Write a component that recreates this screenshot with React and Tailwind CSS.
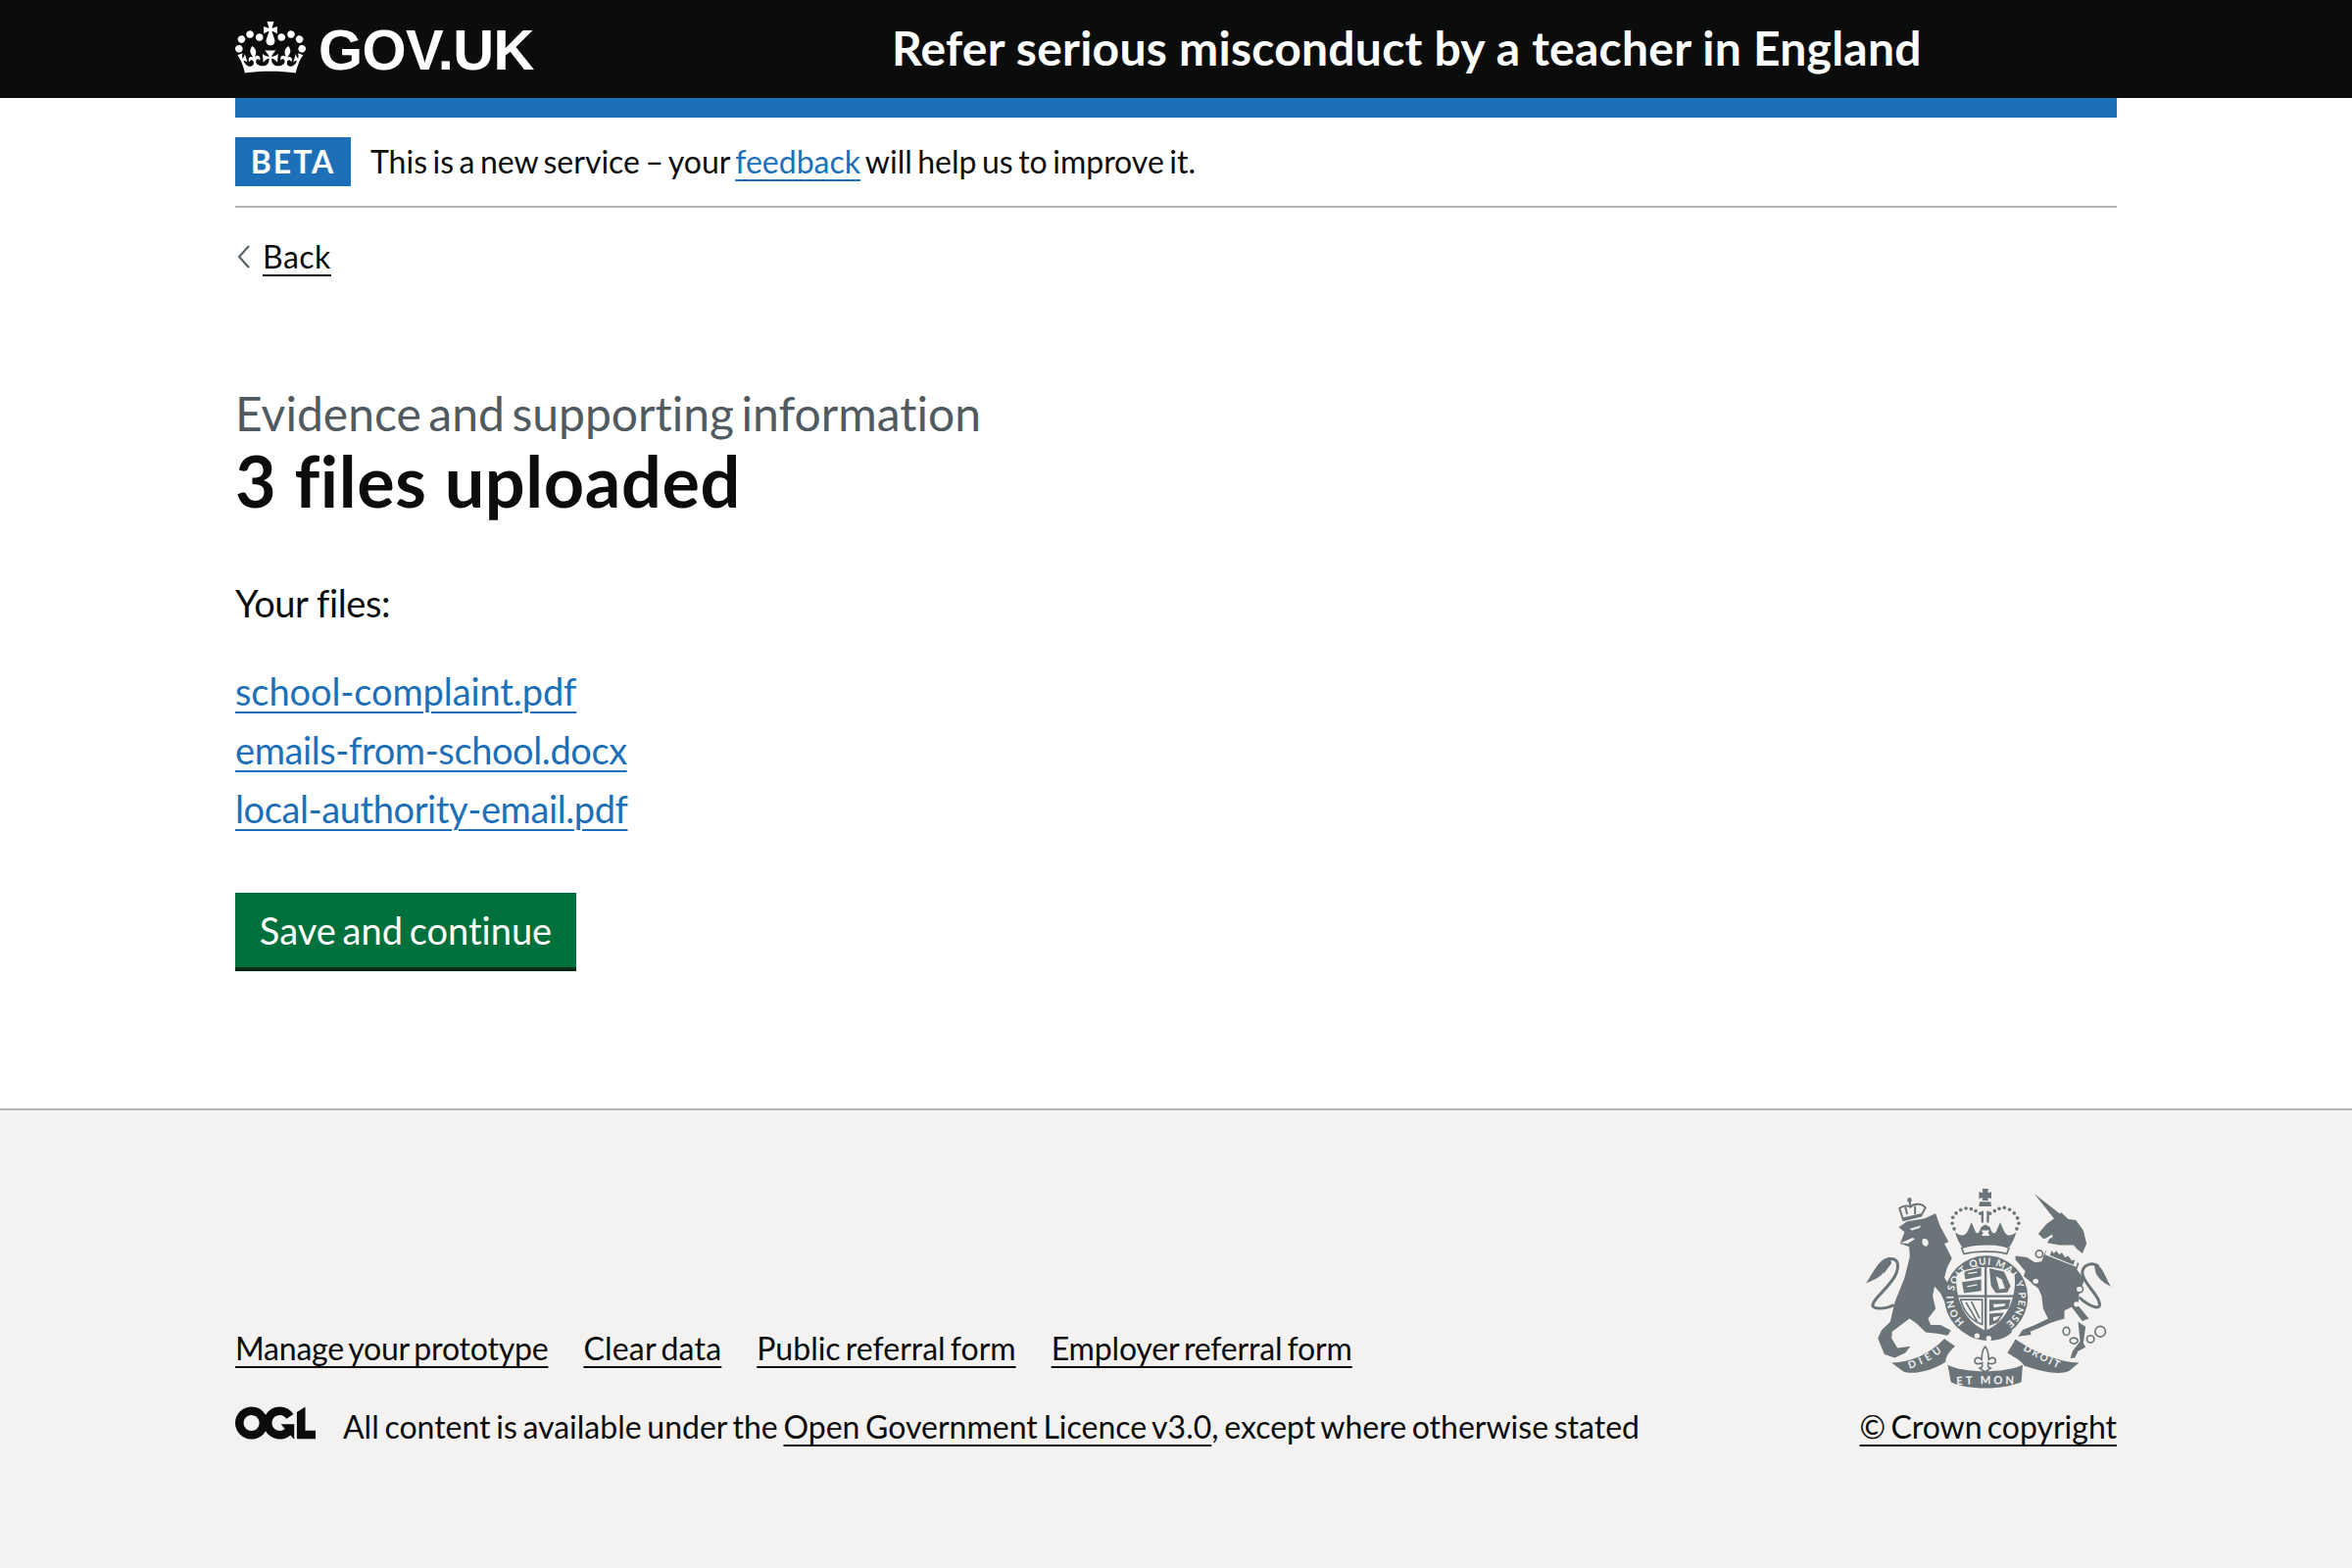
const F = "[font-family:'Lato',sans-serif] [font-variant-ligatures:none]";

function Crown() {
  return (
    <svg viewBox="0 0 132 97" width="72" height="53" className="block shrink-0" fill="currentColor">
      <path fillRule="evenodd" d="M25 30.2c3.5 1.5 7.7-.2 9.1-3.7 1.5-3.6-.2-7.8-3.9-9.2-3.6-1.4-7.6.3-9.1 3.9-1.4 3.5.3 7.5 3.9 9zM9 39.5c3.6 1.5 7.8-.2 9.2-3.7 1.5-3.6-.2-7.8-3.9-9.1-3.6-1.5-7.6.2-9.1 3.8-1.4 3.5.3 7.5 3.8 9zM4.4 57.2c3.5 1.5 7.7-.2 9.1-3.8 1.5-3.6-.2-7.7-3.9-9.1-3.5-1.5-7.6.3-9.1 3.8-1.4 3.5.3 7.6 3.9 9.1zm38.3-21.4c3.5 1.5 7.7-.2 9.1-3.8 1.5-3.6-.2-7.7-3.9-9.1-3.6-1.5-7.6.3-9.1 3.8-1.3 3.6.4 7.7 3.9 9.1zm64.4-5.6c-3.6 1.5-7.8-.2-9.1-3.7-1.5-3.6.2-7.8 3.8-9.2 3.6-1.4 7.7.3 9.2 3.9 1.3 3.5-.4 7.5-3.9 9zm15.9 9.3c-3.6 1.5-7.7-.2-9.1-3.7-1.5-3.6.2-7.8 3.7-9.1 3.6-1.5 7.7.2 9.2 3.8 1.5 3.5-.3 7.5-3.8 9zm4.7 17.7c-3.6 1.5-7.8-.2-9.2-3.8-1.5-3.6.2-7.7 3.9-9.1 3.6-1.5 7.7.3 9.2 3.8 1.3 3.5-.4 7.6-3.9 9.1zM89.3 35.8c-3.6 1.5-7.8-.2-9.2-3.8-1.4-3.6.2-7.7 3.9-9.1 3.6-1.5 7.7.3 9.2 3.8 1.4 3.6-.3 7.7-3.9 9.1zM69.7 17.7l8.9 4.7V9.3l-8.9 2.8c-.2-.3-.5-.6-.9-.9L72.4 0H59.6l3.5 11.2c-.3.3-.6.5-.9.9l-8.8-2.8v13.1l8.8-4.7c.3.3.6.7.9.9l-5 15.4v.1c-.2.8-.4 1.6-.4 2.4 0 4.1 3.1 7.5 7 8.1h.2c.3 0 .7.1 1 .1.4 0 .7 0 1-.1h.2c4-.6 7.1-4.1 7.1-8.1 0-.8-.1-1.7-.4-2.4V34l-5.1-15.4c.4-.2.7-.6 1-.9zM66 92.8c16.9 0 32.8 1.1 47.1 3.2 4-16.9 8.9-26.7 14-33.5l-9.6-3.4c1 4.9 1.1 7.2 0 10.2-1.5-1.4-3-4.3-4.2-8.7L108.6 76c2.8-2 5-3.2 7.5-3.3-4.4 9.4-10 11.9-13.6 11.2-4.3-.8-6.3-4.6-5.6-7.9 1-4.7 5.7-5.9 8-.5 4.3-8.7-3-11.4-7.6-8.8 7.1-7.2 7.9-13.5 2.1-21.1-8 6.1-8.1 12.3-4.5 20.8-4.7-5.4-12.1-2.5-9.5 6.2 3.4-5.2 7.9-2 7.2 3.1-.6 4.3-6.4 7.8-13.5 7.2-10.3-.9-10.9-8-11.2-13.8 2.5-.5 7.1 1.8 11 7.3L80.2 60c-4.1 4.4-8 5.3-12.3 5.4 1.4-4.4 8-11.6 8-11.6H55.5s6.4 7.2 7.9 11.6c-4.2-.1-8-1-12.3-5.4l1.4 16.4c3.9-5.5 8.5-7.7 10.9-7.3-.3 5.8-.9 12.8-11.1 13.8-7.2.6-12.9-2.9-13.5-7.2-.7-5 3.8-8.3 7.1-3.1 2.7-8.7-4.6-11.6-9.4-6.2 3.7-8.5 3.6-14.7-4.6-20.8-5.8 7.6-5 13.9 2.2 21.1-4.7-2.6-11.9.1-7.7 8.8 2.3-5.5 7.1-4.2 8.1.5.7 3.3-1.3 7.1-5.7 7.9-3.5.7-9-1.8-13.5-11.2 2.5.1 4.7 1.3 7.5 3.3l-4.7-15.4c-1.2 4.4-2.7 7.2-4.3 8.7-1.1-3-.9-5.3 0-10.2l-9.5 3.4c5 6.9 9.9 16.7 14 33.5 14.8-2.1 30.8-3.2 47.7-3.2z" />
    </svg>
  );
}

function Ogl() {
  return (
    <svg viewBox="0 0 483.2 195.7" width="82" height="34" className="block shrink-0 mb-[4px]" fill="currentColor">
      <path d="M421.5 142.8V.1l-50.7 32.3v161.1h112.4v-50.7zm-122.3-9.6A47.12 47.12 0 0 1 221 97.8c0-26 21.1-47.1 47.1-47.1 16.7 0 31.4 8.7 39.7 21.8l42.7-27.2A97.63 97.63 0 0 0 268.1 0c-36.5 0-68.3 20.1-85.1 49.7A98 98 0 0 0 97.8 0C43.9 0 0 43.9 0 97.8s43.9 97.8 97.8 97.8c36.5 0 68.3-20.1 85.1-49.7a97.76 97.76 0 0 0 149.6 25.4l19.4 22.2h3v-87.8h-80l24.3 27.5zM97.8 145c-26 0-47.1-21.1-47.1-47.1s21.1-47.1 47.1-47.1 47.2 21 47.2 47S123.8 145 97.8 145" />
    </svg>
  );
}

function Crest() {
  const d = "#6b7579";
  const l = "#f3f2f1";
  const ff = "'Lato',sans-serif";
  return (
    <svg viewBox="60 60 780 640" width="260" height="213" className="block">
      <defs>
        <path id="garter" d="M374 480 A100 100 0 1 1 498 486" />
        <path id="rib1" d="M205 624 C245 612 280 592 312 566" />
        <path id="rib2" d="M350 674 C400 670 480 670 527 672" />
        <path id="rib3" d="M552 566 C590 588 630 610 668 626" />
      </defs>
      <g fill="none" stroke={d} strokeWidth="6">
        <path d="M186 168 L174 132 C190 120 200 124 208 128 C218 116 242 116 254 130 L240 155 Z" />
        <path d="M208 128 L205 108 M192 128 L198 150 M222 125 L222 150" />
      </g>
      <path fill={d} d="M200 100 L210 100 L212 112 L198 112 Z M186 160 L240 148 L244 156 L190 170 Z" />
      <path fill={d} d="M172 190 L198 172 L250 164 L285 148 L298 185 L325 235 L312 240 L335 285 L320 315 L312 345 L345 400 L345 426 L318 430 L300 392 L282 372 L276 400 L285 440 L262 470 L270 490 L300 490 L332 506 L322 522 L290 516 L255 512 L225 484 L205 470 L152 510 L150 530 L168 560 L208 555 L192 575 L160 590 L128 580 L108 530 L120 505 L146 480 L160 420 L190 345 L206 280 L204 250 L176 240 L190 205 Z" />
      <path fill={l} d="M246 226 C262 222 268 240 258 248 C248 250 240 240 246 226 Z M205 195 L240 185 L236 192 L212 200 Z M178 238 L215 222 L222 226 L200 240 Z" />
      <path fill="none" stroke={d} strokeWidth="9" d="M158 428 C125 445 90 440 92 428 C96 405 150 370 165 330 C176 298 165 282 138 288" />
      <path fill={d} d="M145 282 C115 282 95 325 72 362 C95 350 115 345 128 325 C118 345 135 320 150 300 Z" />
      <path fill={d} d="M428 72 L447 72 L445 84 L456 82 L456 102 L445 100 L447 108 L428 108 L430 100 L418 102 L418 82 L430 84 Z M420 112 L454 112 L456 126 L418 126 Z M425 140 L432 140 L432 176 L425 176 Z M442 140 L449 140 L449 176 L442 176 Z" />
      <g fill={d}>
        {[[342,195],[336,178],[338,160],[348,147],[362,137],[378,132],[394,134],[408,140],[422,148],[452,148],[466,140],[480,133],[496,130],[512,136],[526,147],[536,162],[540,178],[534,195]].map(([x, y], i) => (
          <circle key={i} cx={x} cy={y} r="5.5" />
        ))}
      </g>
      <path fill={d} d="M345 205 C365 222 378 215 385 198 L395 175 L405 198 C410 215 420 210 424 190 L438 182 L452 190 C456 210 468 215 473 198 L483 175 L493 198 C500 215 512 222 532 205 C528 225 518 240 512 250 L366 250 C358 240 350 225 345 205 Z" />
      <path fill={l} d="M425 200 L450 200 L446 208 L452 216 L426 216 L431 208 Z" />
      <path fill={l} stroke={d} strokeWidth="5" d="M365 254 C400 238 478 238 510 254 L503 272 C470 262 405 262 372 272 Z" />
      <circle cx="440" cy="405" r="128" fill={d} />
      <path fill={l} d="M350 336 C385 305 490 305 527 336 C535 400 505 482 438 506 C372 482 342 400 350 336 Z" />
      <path fill={d} d="M435 306 L442 306 L442 506 L435 506 Z M347 398 L532 398 L532 405 L347 405 Z" />
      <path fill="none" stroke={d} strokeWidth="5" d="M362 412 L428 412 L428 488 C400 480 370 450 362 412 Z M378 420 L412 478 M395 418 L420 470" />
      <path fill={d} d="M372 326 L425 314 L425 340 L376 350 Z M366 358 L425 350 L425 385 L372 392 Z M450 316 L495 326 L515 370 L505 390 L470 392 L455 370 Z M450 412 L515 412 L508 440 L450 448 Z M450 455 L495 452 L476 482 L450 492 Z" />
      <g fill={l}>
        <path d="M385 332 L412 328 M382 372 L412 366" stroke={l} strokeWidth="4" />
        <path d="M470 340 L488 350 L498 378 L480 380 Z M462 426 L500 424 L496 432 L464 436 Z M462 466 L484 462 L472 474 L462 478 Z" />
      </g>
      <text fill={l} fontSize="30" fontWeight="700" fontFamily={ff}>
        <textPath href="#garter" textLength="490">HONI SOIT QUI MAL Y PENSE</textPath>
      </text>
      <path fill={d} d="M365 505 C400 548 490 548 520 510 L510 498 C485 530 410 530 378 495 Z" />
      <circle cx="412" cy="523" r="8" fill={l} />
      <circle cx="448" cy="531" r="8" fill={l} />
      <path fill={d} d="M588 88 L668 150 L652 168 Z" />
      <path fill={d} d="M650 162 L670 145 L692 165 L715 168 L738 200 L748 240 L735 270 L720 258 L708 245 L665 245 L628 238 L635 222 L615 225 L600 210 L625 180 Z" />
      <path fill={l} d="M622 225 L642 212 L644 220 L626 230 Z" />
      <path fill={d} d="M622 262 L725 300 L718 320 L742 350 L725 395 L722 430 L755 470 L735 478 L702 435 L680 445 L680 470 L640 482 L600 500 L575 510 L578 520 L538 525 L552 505 L590 490 L630 470 L615 440 L610 400 L600 378 L555 340 L560 325 L530 290 L530 278 L565 282 L590 298 L610 295 Z" />
      <path fill={d} d="M722 480 L745 495 L738 545 L745 558 L722 570 L712 590 L698 592 L705 570 L728 540 Z" />
      <path fill={l} d="M628 252 L722 288 L716 312 L620 274 Z" />
      <path fill={d} d="M640 262 L648 270 L655 262 L664 274 L672 268 L682 282 L692 278 L702 292 L712 290 L708 306 L636 276 Z" />
      <g fill="none" stroke={d} strokeWidth="5">
        <circle cx="603" cy="272" r="11" fill={l} />
        <ellipse cx="592" cy="356" rx="11" ry="10" fill={l} />
        <ellipse cx="726" cy="380" rx="11" ry="10" fill={l} />
        <ellipse cx="686" cy="509" rx="10" ry="12" />
        <ellipse cx="709" cy="538" rx="12" ry="9" />
        <circle cx="760" cy="533" r="11" />
        <circle cx="790" cy="510" r="16" />
      </g>
      <circle cx="717" cy="426" r="8" fill={l} />
      <circle cx="694" cy="462" r="8" fill={l} />
      <path fill="none" stroke={d} strokeWidth="9" d="M725 405 C760 435 790 445 788 425 C785 395 735 360 735 330 C735 305 765 295 785 310" />
      <path fill={d} d="M770 300 C795 305 805 340 822 372 C800 360 780 345 775 325 Z" />
      <path fill={d} d="M150 605 C210 605 265 580 312 532 L345 555 C328 570 316 585 316 602 C280 628 215 645 185 632 Z" />
      <path fill={d} d="M725 605 C670 605 590 575 530 533 L505 575 C525 588 550 600 556 614 C610 632 665 645 695 630 Z" />
      <path fill={d} d="M322 612 C370 638 500 638 552 612 L548 665 C490 690 380 690 332 665 Z" />
      <text fill={l} fontSize="31" fontWeight="700" fontFamily={ff}>
        <textPath href="#rib1" textLength="112">DIEU</textPath>
      </text>
      <text fill={l} fontSize="34" fontWeight="700" fontFamily={ff}>
        <textPath href="#rib2" textLength="175">ET MON</textPath>
      </text>
      <text fill={l} fontSize="31" fontWeight="700" fontFamily={ff}>
        <textPath href="#rib3" textLength="122">DROIT</textPath>
      </text>
      <path fill={l} stroke={d} strokeWidth="5" d="M437 556 C450 572 446 588 448 596 C458 585 472 590 468 605 C460 612 452 608 446 606 L446 618 L454 622 L437 634 L420 622 L428 618 L428 606 C422 608 412 612 406 605 C402 590 416 585 426 596 C428 588 424 572 437 556 Z" />
    </svg>
  );
}

const fl = "underline decoration-2 underline-offset-[6px] text-[#0b0c0c]";
const bl = "underline decoration-2 underline-offset-[6px] text-[#1d70b8]";

export default function App() {
  return (
    <div className={`min-h-[1600px] flex flex-col bg-white text-[#0b0c0c] ${F}`}>
      <header className="bg-[#0b0c0c] h-[100px] text-white">
        <div className="w-[1920px] mx-auto h-full flex items-center">
          <div className="w-[670px] flex items-center gap-[13px] pb-[4px]">
            <Crown />
            <span className="text-[58px] leading-none font-bold tracking-[-0.6px] translate-y-[3px] [font-family:'Liberation_Sans',sans-serif]">GOV.UK</span>
          </div>
          <div className="text-[48px] leading-none font-bold tracking-[0.25px] whitespace-nowrap pb-[2px]">Refer serious misconduct by a teacher in England</div>
        </div>
      </header>
      <div className="w-[1920px] mx-auto">
        <div className="h-[20px] bg-[#1d70b8]" />
        <div className="h-[92px] flex items-center border-b-2 border-[#b1b4b6]">
          <span className="bg-[#1d70b8] text-white font-bold text-[32px] leading-none h-[50px] w-[118px] flex items-center justify-center tracking-[2px] mr-[20px]">BETA</span>
          <span className="text-[32px] leading-none [word-spacing:-2.7px]">This is a new service – your <a className={bl}>feedback</a> will help us to improve it.</span>
        </div>
        <div className="mt-[30px] h-[40px] flex items-center">
          <svg width="14" height="24" viewBox="0 0 14 24" className="mr-[12px] ml-[2px]" fill="none" stroke="#505a5f" strokeWidth="2"><path d="M12 1 L2 12 L12 23" /></svg>
          <a className={`text-[32px] leading-none tracking-[0.5px] ${fl}`}>Back</a>
        </div>
        <div className="mt-[116px] text-[48px] leading-none text-[#505a5f] [word-spacing:-4.7px]">Evidence and supporting information</div>
        <h1 className="mt-[8px] text-[72px] leading-none font-bold tracking-[0.6px]">3 files uploaded</h1>
        <p className="mt-[70px] text-[38px] leading-none tracking-[-0.4px]">Your files:</p>
        <div className="mt-[51px] flex flex-col gap-[20px] items-start">
          <a className={`text-[38px] leading-[40px] tracking-[-0.1px] ${bl}`}>school-complaint.pdf</a>
          <a className={`text-[38px] leading-[40px] tracking-[-0.4px] ${bl}`}>emails-from-school.docx</a>
          <a className={`text-[38px] leading-[40px] tracking-[-0.4px] ${bl}`}>local-authority-email.pdf</a>
        </div>
        <button className="mt-[66px] block w-[348px] h-[80px] bg-[#00703c] border-b-4 border-[#002d18] text-white text-[38px] leading-none [word-spacing:-3px]">Save and continue</button>
      </div>
      <footer className="mt-[140px] flex-1 bg-[#f3f2f1] border-t-2 border-[#b1b4b6]">
        <div className="w-[1920px] mx-auto flex items-end pt-[76px]">
          <div className="flex-1 -mb-[1px]">
            <div className="flex gap-[36px] text-[32px] leading-none [word-spacing:-3px]">
              <a className={`tracking-[-0.2px] ${fl}`}>Manage your prototype</a>
              <a className={`tracking-[0.2px] ${fl}`}>Clear data</a>
              <a className={fl}>Public referral form</a>
              <a className={`tracking-[-0.15px] ${fl}`}>Employer referral form</a>
            </div>
            <div className="mt-[43px] flex items-center">
              <Ogl />
              <span className="ml-[28px] pt-[4px] text-[32px] leading-none [word-spacing:-2.5px]">All content is available under the <a className={fl}>Open Government Licence v3.0</a>, except where otherwise stated</span>
            </div>
          </div>
          <div className="flex flex-col items-end">
            <Crest />
            <a className={`mt-[18px] text-[32px] leading-none whitespace-nowrap [word-spacing:-3px] ${fl}`}>© Crown copyright</a>
          </div>
        </div>
      </footer>
    </div>
  );
}
